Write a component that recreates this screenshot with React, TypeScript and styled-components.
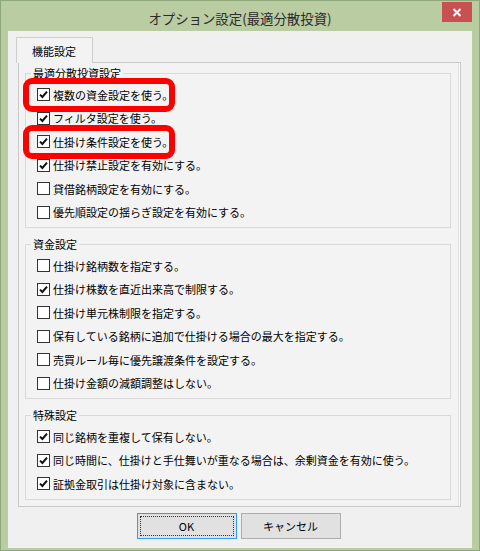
import styled, { createGlobalStyle } from "styled-components";

const GlobalStyle = createGlobalStyle`
  html, body {
    margin: 0;
    padding: 0;
    background: #ffffff;
  }
  *, *::before, *::after {
    box-sizing: border-box;
  }
`;

const FONT = `"Noto Sans CJK JP", "Noto Sans", sans-serif`;

const Window = styled.div`
  width: 480px;
  height: 551px;
  background: #bacca2;
  border: 1px solid #8ea779;
  display: flex;
  flex-direction: column;
  padding: 0 7px 3px;
  font-family: ${FONT};
  color: #000;
`;

const TitleBar = styled.div`
  height: 30px;
  display: grid;
  grid-template-columns: 1fr auto 1fr;
  align-items: start;
  flex-shrink: 0;
`;

const Title = styled.div`
  grid-column: 2;
  font-size: 13.4px;
  line-height: 16px;
  margin-top: 9px;
  color: #2b2b2b;
  white-space: nowrap;
`;

const CloseButton = styled.div`
  grid-column: 3;
  justify-self: end;
  margin-top: 1px;
  width: 30px;
  height: 20px;
  background: #c75050;
  display: grid;
  place-items: center;
`;

const Client = styled.div`
  flex: 1;
  background: #f0f0f0;
  display: flex;
  flex-direction: column;
  padding: 6px 11px 9px 10px;
`;

const TabStrip = styled.div`
  display: flex;
  height: 25px;
  position: relative;
  z-index: 2;
`;

const Tab = styled.div<{ $active?: boolean }>`
  margin-left: -2px;
  width: 77px;
  height: 26px;
  border: 1px solid #cfcfcf;
  border-bottom: none;
  background: ${(p) => (p.$active ? "#f3f3f3" : "#e5e5e5")};
  font-size: 11px;
  line-height: 14px;
  padding: 6px 0 0 15px;
`;

const Panel = styled.div`
  flex: 1;
  border: 1px solid #c9c9c9;
  box-shadow: inset -1px 0 0 #ffffff, inset -2px 0 0 #dedede;
  background: #f3f3f3;
  display: flex;
  flex-direction: column;
  gap: 9px;
  padding: 3px 9px 6px 6px;
`;

const Group = styled.fieldset`
  margin: 0;
  padding: 0;
  min-width: 0;
  border: 1px solid #d9d9d9;
`;

const GroupLabel = styled.legend`
  margin-left: 5px;
  padding: 0 2px;
  font-size: 11px;
  line-height: 14px;
`;

const Rows = styled.div`
  display: flex;
  flex-direction: column;
  padding: 3px 0 3px 11px;
`;

const Row = styled.div<{ $highlight?: boolean }>`
  position: relative;
  height: 23.5px;
  display: flex;
  align-items: center;
  gap: 3px;
  font-size: 11px;
  white-space: nowrap;

  ${(p) =>
    p.$highlight &&
    `
    &::after {
      content: "";
      position: absolute;
      left: -14px;
      top: -5px;
      width: 152px;
      height: 34px;
      border: 6px solid #ff0000;
      border-radius: 9px;
      z-index: 1;
      pointer-events: none;
    }
  `}
`;

const Box = styled.span`
  width: 13px;
  height: 13px;
  flex-shrink: 0;
  border: 1px solid #333333;
  background: #ffffff;
  display: grid;
  place-items: center;
`;

const ButtonBar = styled.div`
  display: flex;
  justify-content: center;
  gap: 4px;
  margin-top: 6px;
  padding-right: 2px;
`;

const Button = styled.div<{ $default?: boolean }>`
  width: 100px;
  height: 26px;
  border: 1px solid ${(p) => (p.$default ? "#3399ff" : "#adadad")};
  background: #e1e1e1;
  display: grid;
  place-items: center;
  font-size: 11px;
  padding: 2px;
`;

const FocusRect = styled.div<{ $on?: boolean }>`
  width: 100%;
  height: 100%;
  border: 1px dotted ${(p) => (p.$on ? "#333" : "transparent")};
  display: grid;
  place-items: center;
`;

function Check({ checked, children, highlight }: { checked: boolean; children: string; highlight?: boolean }) {
  return (
    <Row $highlight={highlight}>
      <Box>
        {checked && (
          <svg width="9" height="9" viewBox="0 0 9 9">
            <path d="M1 4.6 L3.4 7 L8 1.6" fill="none" stroke="#111" strokeWidth="2" />
          </svg>
        )}
      </Box>
      <span>{children}</span>
    </Row>
  );
}

const groups = [
  {
    title: "最適分散投資設定",
    items: [
      { label: "複数の資金設定を使う。", checked: true, highlight: true },
      { label: "フィルタ設定を使う。", checked: true },
      { label: "仕掛け条件設定を使う。", checked: true, highlight: true },
      { label: "仕掛け禁止設定を有効にする。", checked: true },
      { label: "貸借銘柄設定を有効にする。", checked: false },
      { label: "優先順設定の揺らぎ設定を有効にする。", checked: false },
    ],
  },
  {
    title: "資金設定",
    items: [
      { label: "仕掛け銘柄数を指定する。", checked: false },
      { label: "仕掛け株数を直近出来高で制限する。", checked: true },
      { label: "仕掛け単元株制限を指定する。", checked: false },
      { label: "保有している銘柄に追加で仕掛ける場合の最大を指定する。", checked: false },
      { label: "売買ルール毎に優先譲渡条件を設定する。", checked: false },
      { label: "仕掛け金額の減額調整はしない。", checked: false },
    ],
  },
  {
    title: "特殊設定",
    items: [
      { label: "同じ銘柄を重複して保有しない。", checked: true },
      { label: "同じ時間に、仕掛けと手仕舞いが重なる場合は、余剰資金を有効に使う。", checked: true },
      { label: "証拠金取引は仕掛け対象に含まない。", checked: true },
    ],
  },
];

export default function App() {
  return (
    <>
      <GlobalStyle />
      <Window>
        <TitleBar>
          <Title>オプション設定(最適分散投資)</Title>
          <CloseButton>
            <svg width="10" height="9" viewBox="0 0 10 9">
              <path d="M1.5 1 L8.5 8 M8.5 1 L1.5 8" stroke="#fff" strokeWidth="2" />
            </svg>
          </CloseButton>
        </TitleBar>
        <Client>
          <TabStrip>
            <Tab $active>機能設定</Tab>
          </TabStrip>
          <Panel>
            {groups.map((g) => (
              <Group key={g.title}>
                <GroupLabel>{g.title}</GroupLabel>
                <Rows>
                  {g.items.map((it) => (
                    <Check key={it.label} checked={it.checked} highlight={it.highlight}>
                      {it.label}
                    </Check>
                  ))}
                </Rows>
              </Group>
            ))}
          </Panel>
          <ButtonBar>
            <Button $default>
              <FocusRect $on>OK</FocusRect>
            </Button>
            <Button>
              <FocusRect>キャンセル</FocusRect>
            </Button>
          </ButtonBar>
        </Client>
      </Window>
    </>
  );
}
